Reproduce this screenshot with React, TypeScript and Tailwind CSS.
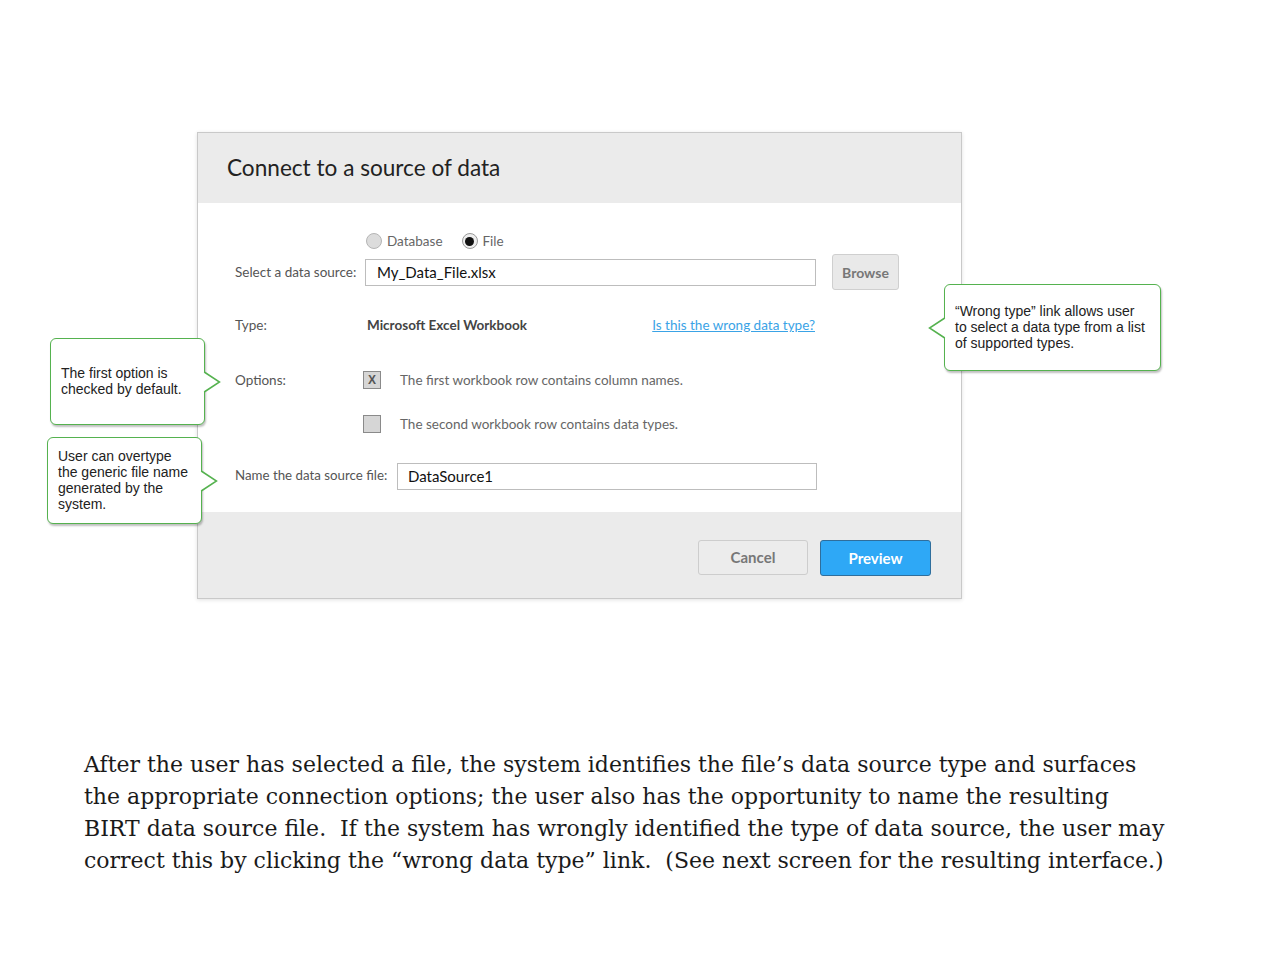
import React from 'react';

const green = '#55b24f';

function Callout({ className, side, children, pad }: { className: string; side: 'left' | 'right'; children: React.ReactNode; pad: string }) {
  return (
    <div className={`absolute bg-white border-[1.5px] border-[#55b24f] rounded-[6px] shadow-[1px_2px_2px_rgba(0,0,0,0.25)] flex items-center ${className}`}>
      <div className={`${pad} text-[14px] leading-[16px] text-[#222] font-['Liberation_Sans',Arial,sans-serif]`}>{children}</div>
      {side === 'right' ? (
        <svg className="absolute right-[-17px] top-1/2 -translate-y-1/2" width="18" height="22" viewBox="0 0 18 22">
          <polygon points="0,1 1.5,1 16.5,11 1.5,21 0,21" fill="white" />
          <polyline points="1.2,1 16.5,11 1.2,21" fill="none" stroke={green} strokeWidth="1.5" />
        </svg>
      ) : (
        <svg className="absolute left-[-17px] top-1/2 -translate-y-1/2" width="18" height="22" viewBox="0 0 18 22">
          <polygon points="18,1 16.5,1 1.5,11 16.5,21 18,21" fill="white" />
          <polyline points="16.8,1 1.5,11 16.8,21" fill="none" stroke={green} strokeWidth="1.5" />
        </svg>
      )}
    </div>
  );
}

function Radio({ checked, label }: { checked?: boolean; label: string }) {
  return (
    <div className="flex items-center gap-[5px]">
      {checked ? (
        <span className="w-[16px] h-[16px] rounded-full border border-[#999] bg-[#eee] flex items-center justify-center">
          <span className="w-[9px] h-[9px] rounded-full bg-[#111]" />
        </span>
      ) : (
        <span className="w-[16px] h-[16px] rounded-full border border-[#b5b5b5] bg-[#dcdcdc]" />
      )}
      <span className="text-[13.5px] text-[#666]">{label}</span>
    </div>
  );
}

function Check({ checked }: { checked?: boolean }) {
  return (
    <span className="w-[18px] h-[18px] border border-[#8a8a8a] bg-[#d6d6d6] flex items-center justify-center text-[12px] font-black text-[#555] leading-none font-['Liberation_Sans',Arial,sans-serif]">
      {checked ? 'X' : ''}
    </span>
  );
}

export default function App() {
  return (
    <div className="relative w-[1280px] h-[960px] bg-white overflow-hidden">
      {/* dialog */}
      <div className="mt-[132px] ml-[197px] w-[765px] border border-[#c9c9c9] shadow-[0_1px_4px_rgba(0,0,0,0.12)] font-['Lato','Open_Sans',sans-serif]">
        <div className="h-[70px] bg-[#ebebeb] flex items-center pl-[29px]">
          <h1 className="text-[22.6px] text-[#222]">Connect to a source of data</h1>
        </div>

        <div className="h-[309px] bg-white pl-[37px] pt-[28px]">
          <div className="h-[20px] flex items-center gap-[19px] pl-[131px]">
            <Radio label="Database" />
            <Radio checked label="File" />
          </div>

          <div className="mt-[3px] h-[36px] flex items-center">
            <span className="w-[130px] text-[13.5px] text-[#555]">Select a data source:</span>
            <div className="w-[451px] h-[27px] border border-[#bdbdbd] flex items-center pl-[11px] text-[15px] text-[#111]">My_Data_File.xlsx</div>
            <button className="ml-[16px] w-[67px] h-[36px] bg-[#e9e9e9] border border-[#cfcfcf] rounded-[3px] text-[14px] font-bold text-[#777]">Browse</button>
          </div>

          <div className="mt-[23px] h-[24px] flex items-center">
            <span className="w-[132px] text-[13.5px] text-[#555]">Type:</span>
            <span className="text-[13.5px] font-bold text-[#444]">Microsoft Excel Workbook</span>
            <a className="ml-auto mr-[146px] text-[13.5px] text-[#3aa3e6] underline">Is this the wrong data type?</a>
          </div>

          <div className="mt-[31px] h-[24px] flex items-center">
            <span className="w-[128px] text-[13.5px] text-[#555]">Options:</span>
            <Check checked />
            <span className="ml-[19px] text-[13.5px] text-[#666]">The first workbook row contains column names.</span>
          </div>

          <div className="mt-[20px] h-[24px] flex items-center pl-[128px]">
            <Check />
            <span className="ml-[19px] text-[13.5px] text-[#666]">The second workbook row contains data types.</span>
          </div>

          <div className="mt-[26px] h-[28px] flex items-center">
            <span className="w-[162px] text-[13.3px] text-[#555]">Name the data source file:</span>
            <div className="w-[420px] h-[27px] border border-[#bdbdbd] flex items-center pl-[10px] text-[15px] text-[#111]">DataSource1</div>
          </div>
        </div>

        <div className="h-[86px] bg-[#ebebeb] flex justify-end items-start pt-[28px] pr-[30px] gap-[12px]">
          <button className="w-[110px] h-[35px] bg-[#ececec] border border-[#cdcdcd] rounded-[3px] text-[15px] font-bold text-[#777]">Cancel</button>
          <button className="w-[111px] h-[36px] bg-[#2ea8f6] border border-[#2f6e9c] rounded-[3px] text-[15px] font-bold text-white">Preview</button>
        </div>
      </div>

      {/* callouts */}
      <Callout className="left-[50px] top-[338px] w-[155px] h-[87px]" side="right" pad="pl-[10px] pb-[2px]">
        The first option is<br />checked by default.
      </Callout>
      <Callout className="left-[47px] top-[437px] w-[155px] h-[87px]" side="right" pad="pl-[10px] pb-[2px]">
        User can overtype<br />the generic file name<br />generated by the<br />system.
      </Callout>
      <Callout className="left-[944px] top-[284px] w-[217px] h-[87px]" side="left" pad="pl-[10px] pb-[2px]">
        “Wrong type” link allows user<br />to select a data type from a list<br />of supported types.
      </Callout>

      {/* description */}
      <p className="mt-[150px] ml-[84px] text-[22px] leading-[32px] text-[#1a1a1a] whitespace-nowrap font-['DejaVu_Serif',serif]">
        After the user has selected a file, the system identifies the file’s data source type and surfaces<br />
        the appropriate connection options; the user also has the opportunity to name the resulting<br />
        BIRT data source file.&nbsp; If the system has wrongly identified the type of data source, the user may<br />
        correct this by clicking the “wrong data type” link.&nbsp; (See next screen for the resulting interface.)
      </p>
    </div>
  );
}
